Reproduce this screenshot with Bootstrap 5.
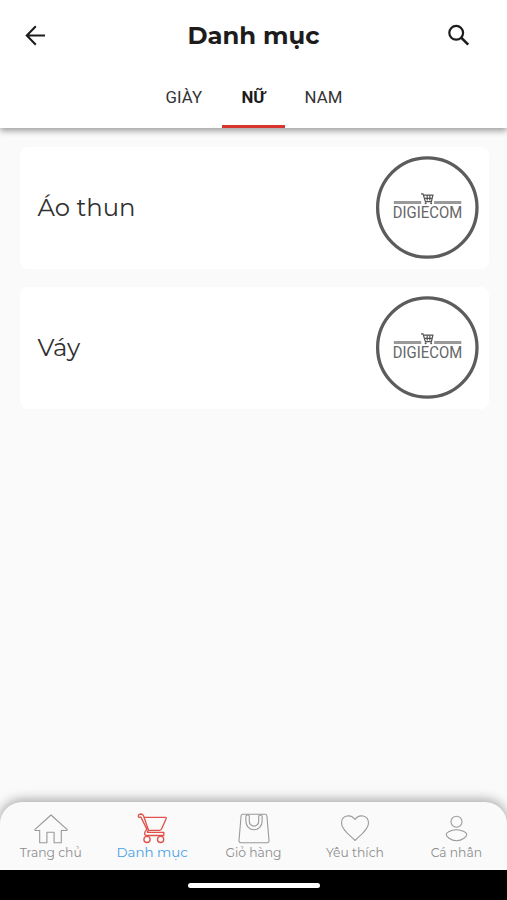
<!DOCTYPE html>
<html lang="vi">
<head>
<meta charset="utf-8">
<meta name="viewport" content="width=device-width, initial-scale=1">
<title>Danh mục</title>
<link href="https://cdn.jsdelivr.net/npm/bootstrap@5.3.0/dist/css/bootstrap.min.css" rel="stylesheet">
<style>
body{background:#fafafa;color:#1c1c1c;font-family:Montserrat,Inter,sans-serif;overflow:hidden}
svg{display:block;flex:none;overflow:visible}
.app-head{height:128px;flex:none;box-shadow:0 3px 6px rgba(0,0,0,.36);z-index:2}
.title-row{height:71px;padding:0 36px 0 24px}
.title-row h1{font-size:24.3px;font-weight:700;line-height:30px;margin-left:12px;padding-bottom:2px}
.tab-row{height:57px;font:400 16.8px/20px Roboto,sans-serif;padding-left:1px}
.tab-row .nav-link{color:#333;padding:16px 19.6px 0;height:57px;border-bottom:3px solid transparent;border-radius:0;letter-spacing:.1px}
.tab-row .nav-link.active{color:#1c1c1c;font-weight:700;border-color:#d8342f}
.cat-list{padding:19px 18px 0 20px;gap:18px}
.cat-item{height:122px;border-radius:8px;padding:0 10px 0 17.5px;font-size:24.3px;color:#303030;font-weight:400}
.cat-item span{padding-bottom:2px}
.bottom-bar{height:68px;flex:none;background:#fafafa;border-radius:22px 22px 0 0;box-shadow:0 -2px 12px rgba(0,0,0,.36)}
.bottom-bar .tab-item{flex:1 1 0;height:68px;font-size:12.3px;line-height:16px;color:#8d8d8d;padding-top:10px;white-space:nowrap;text-decoration:none}
.bottom-bar .tab-item svg{margin-bottom:1px;stroke:#999;fill:none;stroke-width:1.1;stroke-linejoin:round}
.bottom-bar .tab-item.current{color:#45a1e8;font-size:13.4px}
.bottom-bar .tab-item.current svg{stroke:#df5149;stroke-width:1.3;margin-bottom:0}
.system-bar{height:30px;flex:none;background:#000}
.handle{width:132px;height:5px;background:#fff}
</style>
<script src="https://cdn.jsdelivr.net/npm/bootstrap@5.3.0/dist/js/bootstrap.bundle.min.js"></script>
</head>
<body>
<svg width="0" height="0" class="position-absolute" aria-hidden="true">
  <symbol id="brand" viewBox="0 0 104 104">
    <circle cx="52.3" cy="51.5" r="49.7" fill="#fff" stroke="#5c5c5c" stroke-width="3.3"/>
    <path d="M18.8 46.5h27.4M59.1 46.5h27.2" stroke="#9a9a9a" stroke-width="3.2"/>
    <path d="M46 37.8h2l2.4 7.8h6l1.5-6.4H48.7M49.5 42.3h7.6M52.2 39.5v5M54.8 39.5v5" fill="none" stroke="#555" stroke-width="1.2"/>
    <circle cx="50.6" cy="47.3" r="1" fill="#555"/><circle cx="56.2" cy="47.3" r="1" fill="#555"/>
    <text x="17.8" y="61.8" textLength="69.4" lengthAdjust="spacingAndGlyphs" font-family="Roboto,sans-serif" font-weight="400" font-size="15.6" fill="#666">DIGIECOM</text>
  </symbol>
</svg>
<div class="d-flex flex-column vh-100">
  <header class="app-head bg-white position-relative">
    <div class="title-row d-flex align-items-center justify-content-between">
      <svg width="24" height="24" viewBox="0 0 24 24" fill="none" stroke="#1c1c1c" stroke-width="2.1"><path d="M21 11.5H3.2M11.8 2.3 2.8 11.5l9 9.2"/></svg>
      <h1 class="mb-0">Danh mục</h1>
      <svg width="24" height="24" viewBox="0 0 24 24" fill="none" stroke="#1c1c1c" stroke-width="2.2"><circle cx="9.2" cy="8.8" r="6.9"/><path stroke-width="2.7" d="m14.2 13.6 7 7"/></svg>
    </div>
    <nav class="tab-row nav justify-content-center flex-nowrap">
      <a class="nav-link" href="#">GIÀY</a>
      <a class="nav-link active" href="#">NỮ</a>
      <a class="nav-link" href="#">NAM</a>
    </nav>
  </header>
  <main class="cat-list d-flex flex-column flex-grow-1">
    <div class="cat-item bg-white d-flex align-items-center justify-content-between"><span>Áo thun</span><svg width="104" height="104"><use href="#brand"/></svg></div>
    <div class="cat-item bg-white d-flex align-items-center justify-content-between"><span>Váy</span><svg width="104" height="104"><use href="#brand"/></svg></div>
  </main>
  <nav class="bottom-bar d-flex">
    <a href="#" class="tab-item d-flex flex-column align-items-center">
      <svg width="34" height="32" viewBox="0 0 34 32"><path d="M17 3 1 17.4v1.1h4.7v12.2h7.2V20.3h7.2v10.4h7.2V18.5H33v-1.1Z"/></svg><span>Trang chủ</span></a>
    <a href="#" class="tab-item current d-flex flex-column align-items-center">
      <svg width="34" height="32" viewBox="0 0 34 32"><path d="M9.4 5.4H30.6q1 0 .6 1l-4.4 10.2q-.7 1.7-2.2 1.7H14q-1.7.2-1.6 2H28.8v3.2H11.2q-2.4-.7-1.2-3.4l1.8-3L6.2 5.6Q5.6 4.6 5 5.2 3.4 5.8 3.2 4 3.4 2.1 5.6 2q2.2 0 2.9 1.7l5 14.4"/><circle cx="12" cy="27.4" r="3.1"/><circle cx="25.6" cy="27.4" r="3.1"/></svg><span>Danh mục</span></a>
    <a href="#" class="tab-item d-flex flex-column align-items-center">
      <svg width="34" height="32" viewBox="0 0 34 32"><path d="M5.8 2.3h22.4q1.5 0 1.7 1.5l2.1 24.7q.1 2.2-2 2.2H4q-2.1 0-2-2.2L4.1 3.8q.2-1.5 1.7-1.5Z"/><path d="M8.9 3.8V9.6a8.1 8.1 0 0 0 16.2 0V3.8q-1.7-1.5-3.4 0V9.4a4.7 4.7 0 0 1-9.4 0V3.8q-1.7-1.5-3.4 0Z"/></svg><span>Giỏ hàng</span></a>
    <a href="#" class="tab-item d-flex flex-column align-items-center">
      <svg width="34" height="32" viewBox="0 0 34 32"><path d="M17 28.5C13 24.3 3.5 17.8 3.5 11.2 3.5 2.8 13.2 1.8 17 7.5 20.8 1.8 30.5 2.8 30.5 11.2 30.5 17.8 21 24.3 17 28.5Z"/></svg><span>Yêu thích</span></a>
    <a href="#" class="tab-item d-flex flex-column align-items-center">
      <svg width="34" height="32" viewBox="0 0 34 32"><circle cx="17.5" cy="9.8" r="5.5"/><path d="M7.2 22.5c0-1.7 4.2-4.7 10.3-4.7s10.3 3 10.3 4.7-4.2 6.2-10.3 6.2S7.2 24.2 7.2 22.5Z"/></svg><span>Cá nhân</span></a>
  </nav>
  <div class="system-bar d-flex align-items-center justify-content-center"><div class="handle rounded-pill"></div></div>
</div>
</body>
</html>
